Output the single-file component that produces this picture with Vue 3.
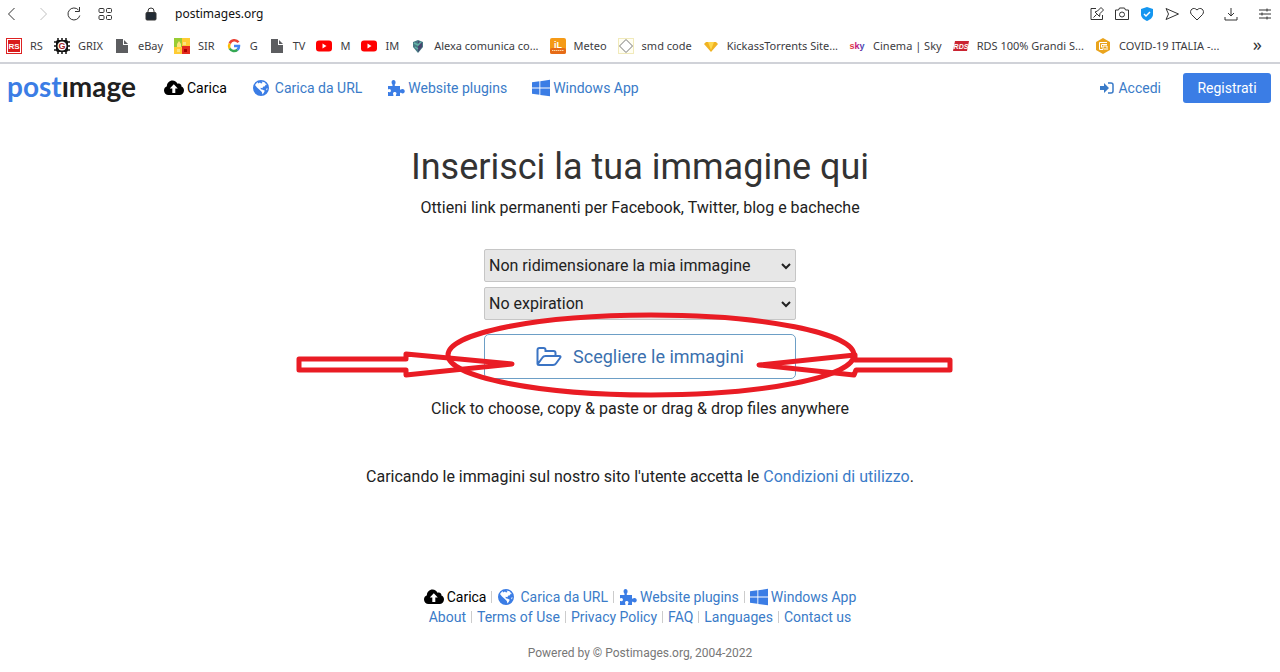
<template>
  <div class="page">
    <header class="browser">
      <div class="toolbar">
        <button class="tool" aria-label="Indietro"><svg class="ico" viewBox="0 0 16 16"><path d="M10.500 2 4.500 8l6 6" /></svg></button>
        <button class="tool off" aria-label="Avanti"><svg class="ico" viewBox="0 0 16 16"><path d="m5.500 2 6 6-6 6" /></svg></button>
        <button class="tool" aria-label="Ricarica"><svg class="ico" viewBox="0 0 16 16"><path d="M13.800 9.500A6 6 0 1 1 12.500 4M13.500 1v4.500H9" /></svg></button>
        <button class="tool" aria-label="Schede"><svg class="ico" viewBox="0 0 16 16"><rect x="2" y="2.500" width="5" height="4" rx="1" /><rect x="9.500" y="2.500" width="5" height="4" rx="1" /><rect x="2" y="9.500" width="5" height="4" rx="1" /><rect x="9.500" y="9.500" width="5" height="4" rx="1" /></svg></button>
        <div class="address">
          <svg class="ico lock" viewBox="0 0 16 16"><rect x="3" y="6.500" width="10" height="7.500" rx="1" fill="#222b35" /><path d="M5 7V5a3 3 0 0 1 6 0v2" /></svg>
          <span>postimages.org</span>
        </div>
        <div class="actions">
          <button class="tool" aria-label="Modifica"><svg class="ico" viewBox="0 0 16 16"><path d="M7 2.500H2v11h11.500V9M4.500 11.500l3-3M6 6l4.500 4.500.5-3L14.500 4l-2.500-2.500L8.500 5z" /></svg></button>
          <button class="tool" aria-label="Istantanea"><svg class="ico" viewBox="0 0 16 16"><path d="M1.500 4h3l1-2h5l1 2h3v9.500h-13z" /><circle cx="8" cy="8.500" r="2.500" /></svg></button>
          <button class="tool" aria-label="Protezione"><svg class="ico" viewBox="0 0 16 16"><path d="m8 1 6 2v5c0 4-3 5.500-6 7-3-1.500-6-3-6-7V3z" fill="#1496f0" stroke="none" /><path d="m5 8 2 2 4-4" stroke="#fff" stroke-width="1.500" /></svg></button>
          <button class="tool" aria-label="Invia"><svg class="ico" viewBox="0 0 16 16"><path d="M2 2.500 14.500 8 2 13.500 4.500 8z" /></svg></button>
          <button class="tool" aria-label="Preferiti"><svg class="ico" viewBox="0 0 16 16"><path d="M8 14 2.500 8.500C-.5 5 4-.2 8 4c4-4.200 8.500 1 5.500 4.500z" /></svg></button>
          <button class="tool spaced" aria-label="Download"><svg class="ico" viewBox="0 0 16 16"><path d="M8 2v8M5 7l3 3 3-3M2 11v3h12v-3" /></svg></button>
          <button class="tool spaced" aria-label="Impostazioni"><svg class="ico" viewBox="0 0 16 16"><path d="M2 4h12M2 8h12M2 12h12M10 2.500v3M5 6.500v3M10 10.500v3" /></svg></button>
        </div>
      </div>
      <nav class="bookmarks" aria-label="Segnalibri">
        <a v-for="item in bookmarks" :key="item.label" href="#" class="bookmark">
          <svg class="favicon" viewBox="0 0 16 16">
            <template v-if="item.icon === 'rs'">
              <rect x=".5" y=".5" width="15" height="15" fill="#fff" stroke="#d22" /><rect x="2" y="2" width="12" height="12" fill="#d91c1c" />
              <text x="8" y="11" font-size="8" font-weight="bold" fill="#fff" text-anchor="middle">RS</text>
            </template>
            <template v-else-if="item.icon === 'grix'">
              <path d="M4 0v16M8 0v16M12 0v16M0 4h16M0 8h16M0 12h16" stroke="#111" stroke-width="1.500" /><rect x="2" y="2" width="12" height="12" rx="2" fill="#111" /><circle cx="8" cy="8" r="4.500" fill="#fff" />
              <text x="8" y="11.200" font-size="9" font-weight="bold" fill="#a31f2b" text-anchor="middle">G</text>
            </template>
            <path v-else-if="item.icon === 'file'" d="M2 1h7v6h5v8H2zM10 2l4 4h-4z" fill="#5c5d60" />
            <template v-else-if="item.icon === 'sir'">
              <rect width="16" height="16" fill="#fc3" /><rect width="8" height="9" fill="#9c3" /><rect x="8" y="8" width="8" height="8" fill="#e32a1e" /><path d="M3 6 5 3l2 3v3H3zM9 4h3v3H9zM3 11h3v3H3z" fill="#fbe37e" /><path d="M10 14v-3h3v3" fill="#a00" />
            </template>
            <template v-else-if="item.icon === 'google'">
              <g fill="none" stroke-width="2.500"><path d="M12.500 4.300A5 5 0 0 0 3.700 5.500" stroke="#ea4335" /><path d="M3.700 5.500a5 5 0 0 0 0 5" stroke="#fbbc05" /><path d="M3.700 10.500a5 5 0 0 0 7.700 1.300" stroke="#34a853" /><path d="M11.400 11.800A5 5 0 0 0 13 8H8" stroke="#4285f4" /></g>
            </template>
            <template v-else-if="item.icon === 'youtube'">
              <rect y="2.500" width="16" height="11" rx="3" fill="#f00" /><path d="m6.500 5.500 4 2.500-4 2.500z" fill="#fff" />
            </template>
            <template v-else-if="item.icon === 'alexa'">
              <path d="m8 2 5 2v5l-5 6-5-6V4z" fill="#477984" /><path d="M8 3v11l4-5V5z" fill="#48466f" /><path d="m4 5 4 2 3-3M5 9l3 2" stroke="#63b3a7" stroke-width="1.500" fill="none" />
            </template>
            <template v-else-if="item.icon === 'meteo'">
              <rect width="16" height="16" rx="2" fill="#f59a16" /><rect y="10" width="16" height="6" rx="2" fill="#e66b17" />
              <text x="8" y="9.500" font-size="9" font-weight="bold" fill="#fff" text-anchor="middle">iL</text><path d="M2 12.500h12" stroke="#ffd7a0" stroke-dasharray="1.500 .5" />
            </template>
            <template v-else-if="item.icon === 'smd'">
              <rect x=".5" y=".5" width="15" height="15" fill="#fffef3" stroke="#e3d77c" stroke-dasharray="1 1" /><path d="m8 1.500 6.500 6.500L8 14.500 1.500 8z" fill="#fff" stroke="#777" />
            </template>
            <template v-else-if="item.icon === 'gem'">
              <path d="M3 4h10l2 2-7 8-7-8z" fill="#f0b323" /><path d="m5 4 3 8 3-8z" fill="#ffd84d" />
            </template>
            <template v-else-if="item.icon === 'sky'">
              <defs><linearGradient id="sky"><stop stop-color="#e8482f" /><stop offset=".5" stop-color="#c5147d" /><stop offset="1" stop-color="#2455c3" /></linearGradient></defs>
              <text x="8" y="11" font-size="9" font-weight="bold" fill="url(#sky)" text-anchor="middle">sky</text>
            </template>
            <template v-else-if="item.icon === 'rds'">
              <path d="M2 3h14l-2 10H0z" fill="#ca2431" /><text x="8" y="11" font-size="7" font-weight="bold" font-style="italic" fill="#fff" text-anchor="middle">RDS</text>
            </template>
            <template v-else>
              <path d="m8 0 7 4v8l-7 4-7-4V4z" fill="#eaa41d" /><path d="M12 4.500H4.500v7H8V8h4v4M6.500 9.500v-3H12M10 10v2" stroke="#fff" fill="none" />
            </template>
          </svg>
          <span>{{ item.label }}</span>
        </a>
        <button class="more" aria-label="Altri segnalibri">»</button>
      </nav>
    </header>

    <nav class="site-nav">
      <a href="#" class="logo"><span>post</span>ımage</a>
      <a v-for="item in menu" :key="item.label" href="#" class="menu-link" :class="item.icon">
        <svg class="menu-icon" :viewBox="glyphs[item.icon].box"><path :d="glyphs[item.icon].d" /></svg>
        <span>{{ item.label }}</span>
      </a>
      <a href="#" class="login">
        <svg viewBox="0 0 14 14"><path d="M0 5h4V2l5 5-5 5V9H0z" fill="currentColor" /><path d="M8 2h3q2 0 2 2v6q0 2-2 2H8" fill="none" stroke="currentColor" stroke-width="1.500" /></svg>
        Accedi
      </a>
      <button class="register">Registrati</button>
    </nav>

    <main class="content">
      <h1>Inserisci la tua immagine qui</h1>
      <p class="lead">Ottieni link permanenti per Facebook, Twitter, blog e bacheche</p>
      <form class="upload" @submit.prevent>
        <div class="select-box">
          <select v-model="size" aria-label="Dimensione">
            <option value="none">Non ridimensionare la mia immagine</option>
          </select>
          <svg viewBox="0 0 10 8"><path d="m1 2 4 4 4-4" /></svg>
        </div>
        <div class="select-box">
          <select v-model="expiration" aria-label="Scadenza">
            <option value="0">No expiration</option>
          </select>
          <svg viewBox="0 0 10 8"><path d="m1 2 4 4 4-4" /></svg>
        </div>
        <div class="choose-box">
          <button type="button" class="choose">
            <svg viewBox="0 0 26 20"><path d="M1.500 17V3q0-2 2-2h4q2 0 2 2v1h8q2 0 2 2v3M1.500 17.500l5-7q1-1.500 3-1.500h13.500q2.500 0 1 2l-4 5.500q-1 1.500-3 1.500H3q-1.500 0-1.500-1.500" /></svg>
            Scegliere le immagini
          </button>
          <svg class="marks" viewBox="0 0 700 90" aria-hidden="true">
            <ellipse cx="361" cy="45" rx="203" ry="40" />
            <path d="M9 49h107v-5l106 10-106 11v-5H9z" />
            <path d="M660 50h-95v-5l-96 10 95 10 2-5h94z" />
          </svg>
        </div>
      </form>
      <p class="hint">Click to choose, copy &amp; paste or drag &amp; drop files anywhere</p>
      <p class="terms">Caricando le immagini sul nostro sito l'utente accetta le <a href="#">Condizioni di utilizzo</a>.</p>
    </main>

    <footer class="footer">
      <ul class="foot-row">
        <li v-for="item in menu" :key="item.label">
          <a href="#" class="menu-link" :class="item.icon">
            <svg class="menu-icon" :viewBox="glyphs[item.icon].box"><path :d="glyphs[item.icon].d" /></svg>
            <span>{{ item.label }}</span>
          </a>
        </li>
      </ul>
      <ul class="foot-row">
        <li v-for="label in links" :key="label"><a href="#">{{ label }}</a></li>
      </ul>
      <p class="powered">Powered by © Postimages.org, 2004-2022</p>
    </footer>
  </div>
</template>

<script setup>
import { ref } from 'vue';

const size = ref('none');
const expiration = ref('0');

const bookmarks = [
  { icon: 'rs', label: 'RS' },
  { icon: 'grix', label: 'GRIX' },
  { icon: 'file', label: 'eBay' },
  { icon: 'sir', label: 'SIR' },
  { icon: 'google', label: 'G' },
  { icon: 'file', label: 'TV' },
  { icon: 'youtube', label: 'M' },
  { icon: 'youtube', label: 'IM' },
  { icon: 'alexa', label: 'Alexa comunica co...' },
  { icon: 'meteo', label: 'Meteo' },
  { icon: 'smd', label: 'smd code' },
  { icon: 'gem', label: 'KickassTorrents Site...' },
  { icon: 'sky', label: 'Cinema | Sky' },
  { icon: 'rds', label: 'RDS 100% Grandi S...' },
  { icon: 'covid', label: 'COVID-19 ITALIA -...' }
];

const menu = [
  { icon: 'cloud', label: 'Carica' },
  { icon: 'globe', label: 'Carica da URL' },
  { icon: 'puzzle', label: 'Website plugins' },
  { icon: 'windows', label: 'Windows App' }
];

const links = ['About', 'Terms of Use', 'Privacy Policy', 'FAQ', 'Languages', 'Contact us'];

const glyphs = {
  cloud: {
    box: '0 0 20 18',
    d: 'M4.500 16C2 16 0 14 0 11.500 0 9.500 1.200 8 2.900 7.300 2.800 4 5.500 1.500 8.500 1.500c2.300 0 4.200 1.300 5 3.300 2-1 4.300.5 3.900 2.800 1.600.6 2.600 2 2.600 3.900 0 2.500-2 4.500-4.500 4.500zM8.300 14h3V9.500h2.500L9.800 5.300 5.800 9.500h2.500z'
  },
  globe: {
    box: '0 0 18 18',
    d: 'M9 1a8 8 0 1 0 0 16A8 8 0 0 0 9 1zM9.500 2.500l3 .8 2.500 3-1.500-.5-.5 1.500-2 .5-.5 1.500-2-.5.3 1.500 2 .5 2 1-1 2-1.300 1.700-.7-2.500-2-2-2.800-2.500L3 6l2.500-3 .5 1.500 2-1 1 1 1.500-.5zM15.500 9l-.5 2.500-1-1.500z'
  },
  puzzle: {
    box: '0 0 18 18',
    d: 'M1 7h4.500V5.500C4.200 4.500 4 1 6.500 1S9 4.500 7.800 5.500V7H13v3.500c1 .5 1.500-.5 2.500-.5 3 0 3 4.500 0 4.500-1 0-1.500-1-2.500-.5v3H9c-.5-1 .5-1.500.5-2.500 0-2-3.500-2-3.500 0 0 1 .8 1.500.3 2.500H1v-4c1 0 1.500.5 2.300 0 1.200-1 .5-3-.8-3-.5 0-1 .5-1.500.3z'
  },
  windows: {
    box: '0 0 18 18',
    d: 'M0 3.300l7.400-1v6.300H0zm0 6.200h7.400v6.300L0 14.800zm8.300-7.300L18 .8v7.800H8.300zm0 7.300H18v7.800l-9.700-1.400z'
  }
};
</script>

<style>
body {
  margin: 0;
  background: #fff;
}
</style>

<style scoped>
.page {
  color: #222;
  font-family: Roboto, "Liberation Sans", sans-serif;
  font-size: 16px;
}

a {
  color: #3a7bc8;
  text-decoration: none;
}

button {
  font-family: inherit;
  cursor: pointer;
}

h1,
p {
  margin: 0;
}

.browser {
  height: 62px;
  border-bottom: 2px solid #d0d2d8;
  font-family: "Noto Sans", "Open Sans", sans-serif;
}

.toolbar {
  display: flex;
  align-items: center;
  gap: 15px;
  height: 28px;
  padding: 0 7px 0 4px;
}

.tool {
  display: flex;
  padding: 0;
  border: 0;
  background: none;
}

.off {
  opacity: 0.3;
}

.ico {
  width: 16px;
  height: 16px;
  fill: none;
  stroke: #333;
  stroke-width: 1;
}

.address {
  display: flex;
  flex: 1;
  align-items: center;
  gap: 16px;
  margin-left: 15px;
  color: #111;
  font-size: 12px;
  line-height: 28px;
}

.actions {
  display: flex;
  gap: 9px;
}

.spaced {
  margin-left: 9px;
}

.bookmarks {
  display: flex;
  align-items: center;
  gap: 11px;
  height: 36px;
  padding: 0 18px 0 6px;
  line-height: 18px;
}

.bookmark {
  display: flex;
  align-items: center;
  gap: 8px;
  color: #3c3c3f;
  font-size: 11px;
  white-space: nowrap;
}

.favicon {
  flex: none;
  width: 16px;
  height: 16px;
  font-family: "Liberation Sans", sans-serif;
}

.more {
  margin-left: auto;
  padding: 0 0 4px;
  border: 0;
  background: none;
  color: #333;
  font-size: 18px;
  line-height: 18px;
}

.site-nav {
  display: flex;
  align-items: center;
  height: 48px;
  padding: 0 9px 0 7px;
  font-size: 14px;
}

.logo {
  width: 157px;
  padding-bottom: 4px;
  color: #202020;
  font-family: Lato, sans-serif;
  font-size: 28px;
  font-variant-ligatures: none;
  font-weight: 700;
  line-height: 32px;
}

.logo span {
  color: #3b7de5;
}

.menu-link {
  display: flex;
  align-items: center;
  gap: 3px;
}

.site-nav .menu-link {
  margin-right: 25px;
}

.menu-icon {
  width: 18px;
  height: 18px;
  fill: #3b7de5;
  fill-rule: evenodd;
}

.cloud {
  color: #000;
}

.cloud .menu-icon {
  width: 20px;
  fill: #000;
}

.globe {
  gap: 5px;
}

.login {
  display: flex;
  align-items: center;
  gap: 4px;
  margin-left: auto;
}

.login svg {
  width: 14px;
  height: 14px;
}

.register {
  width: 88px;
  height: 30px;
  margin-left: 22px;
  padding: 0;
  border: 0;
  border-radius: 3px;
  background: #3b7de5;
  color: #fff;
  font-size: 14px;
}

.content {
  display: flex;
  flex-direction: column;
  align-items: center;
  padding-top: 33px;
  line-height: 24px;
  text-align: center;
}

h1 {
  color: #333;
  font-size: 36px;
  font-weight: 400;
  line-height: 44px;
}

.lead {
  margin-top: 7px;
}

.upload {
  display: flex;
  flex-direction: column;
  gap: 5px;
  width: 312px;
  margin-top: 29px;
}

.select-box {
  display: grid;
  align-items: center;
}

.select-box > * {
  grid-area: 1 / 1;
}

.select-box select {
  width: 100%;
  height: 33px;
  padding: 0 4px;
  border: 1px solid #c6c6c6;
  border-radius: 2px;
  appearance: none;
  background: #e7e7e7;
  color: #222;
  font: inherit;
}

.select-box svg {
  justify-self: end;
  width: 10px;
  height: 8px;
  margin-right: 5px;
  fill: none;
  stroke: #222;
  stroke-width: 2;
  pointer-events: none;
}

.choose-box {
  position: relative;
  margin-top: 9px;
}

.choose {
  display: flex;
  align-items: center;
  justify-content: center;
  gap: 11px;
  width: 100%;
  height: 45px;
  border: 1px solid #6d9fc6;
  border-radius: 5px;
  background: #fff;
  color: #3a70ae;
  font-size: 18px;
}

.choose svg {
  width: 26px;
  height: 20px;
  fill: none;
  stroke: #3b74c4;
  stroke-width: 2;
}

/* hand-drawn marks laid over the upload button */
.marks {
  position: absolute;
  top: -24px;
  left: 50%;
  width: 700px;
  height: 90px;
  margin-left: -350px;
  fill: none;
  stroke: #e91c24;
  stroke-width: 5;
  stroke-linejoin: round;
  pointer-events: none;
}

.hint {
  margin-top: 18px;
}

.terms {
  margin-top: 44px;
}

.footer {
  display: flex;
  flex-direction: column;
  align-items: center;
  margin-top: 98px;
  font-size: 14px;
  line-height: 20px;
}

.foot-row {
  display: flex;
  margin: 0;
  padding: 0;
  list-style: none;
}

.foot-row li {
  display: flex;
  align-items: center;
}

.foot-row li + li::before {
  width: 1px;
  height: 12px;
  margin: 0 5px;
  background: #ccc;
  content: "";
}

.powered {
  margin-top: 16px;
  color: #777;
  font-size: 12px;
}
</style>
